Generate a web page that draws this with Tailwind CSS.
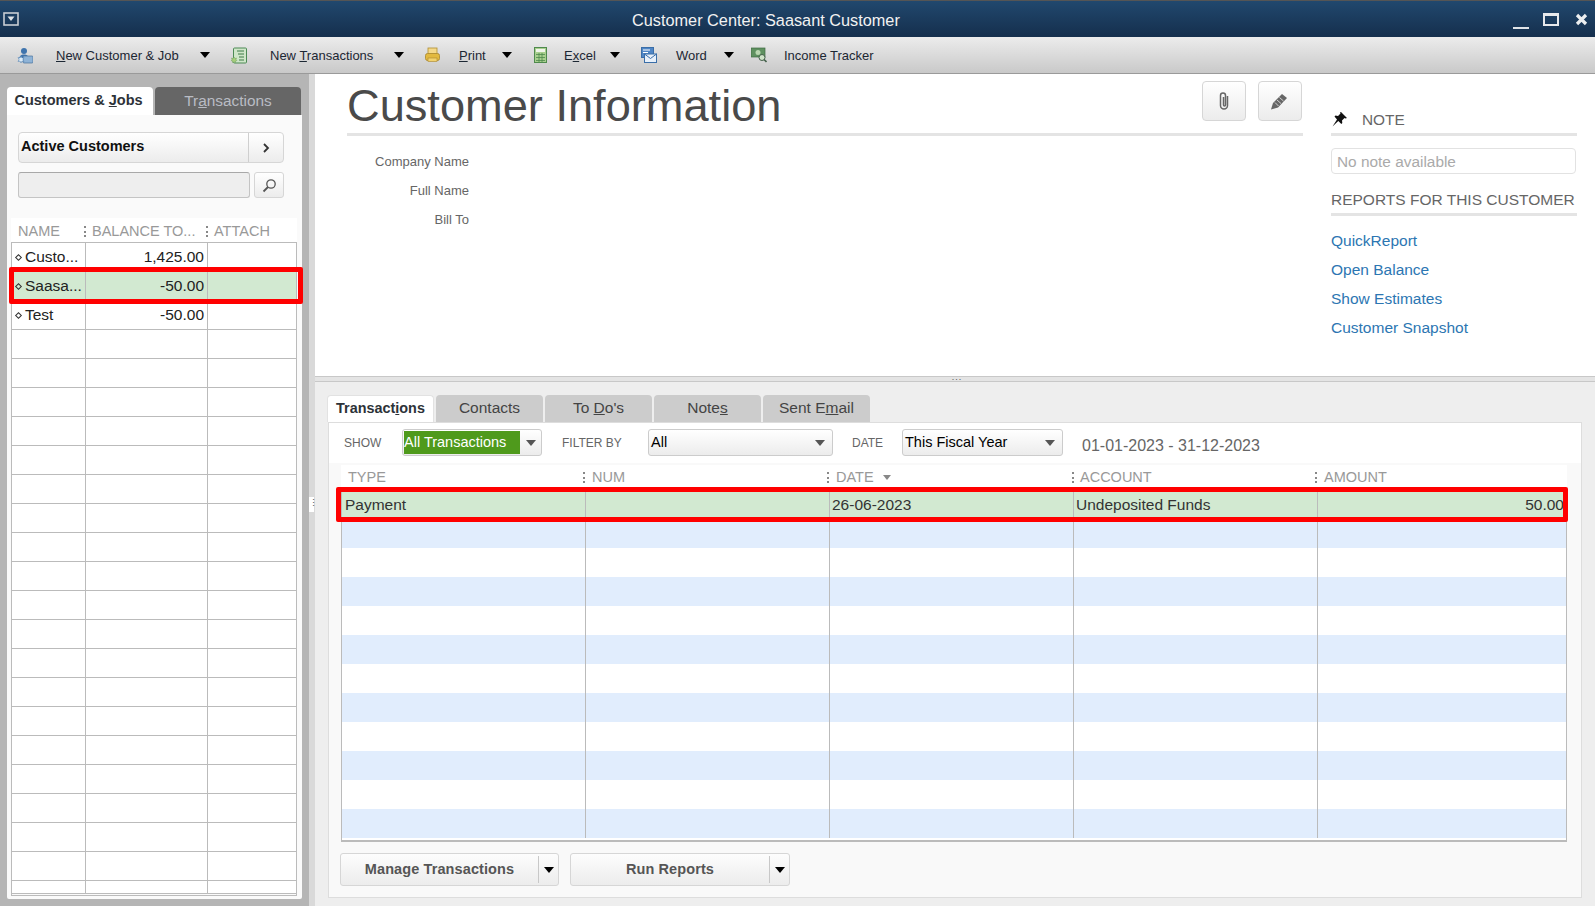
<!DOCTYPE html>
<html lang="en">
<head>
  <meta charset="UTF-8">
  <title>Customer Center: Saasant Customer</title>
  <script src="https://cdn.jsdelivr.net/npm/@tailwindcss/browser@4"></script>
</head>
<body class="font-['Liberation_Sans',Arial,sans-serif] bg-[#eeeeee] overflow-hidden">
<div class="w-[1595px] h-[906px] flex flex-col overflow-hidden">

  <!-- Title bar -->
  <header class="h-[37px] shrink-0 flex items-center relative bg-linear-to-b from-[#21486e] to-[#152f4d] border-t border-[#555]">
    <svg class="ml-[3px]" width="16" height="14" viewBox="0 0 16 14"><rect x="1" y="1" width="14" height="12" fill="none" stroke="#c9ced4" stroke-width="1.6"/><path d="M4.5 4.5h7L8 9z" fill="#dfe3e7"/></svg>
    <span class="ml-[613px] mt-[2px] text-[16.3px] text-[#f2f2f2]">Customer Center: Saasant Customer</span>
    <div class="ml-auto mr-[7px] flex items-center gap-[14px]">
      <span class="w-[16px] h-[2px] bg-[#dfe3e7] mt-[18px]"></span>
      <span class="w-[16px] h-[13px] mr-[2px] border-2 border-t-[3px] border-[#e6e8eb]"></span>
      <svg width="13" height="13" viewBox="0 0 13 13"><path d="M2 2l9 9M11 2l-9 9" stroke="#eceef0" stroke-width="3.2"/></svg>
    </div>
  </header>

  <!-- Toolbar -->
  <nav class="h-[37px] shrink-0 flex items-center bg-linear-to-b from-[#ececec] to-[#c9c9c9] border-b border-[#9a9a9a] text-[13px] text-[#1c2733]">
    <svg class="ml-[17px]" width="16" height="17" viewBox="0 0 16 17"><circle cx="7" cy="4" r="3" fill="#3f74ad"/><path d="M2 13c0-4 2-5.500 5-5.500s5 1.500 5 5.500z" fill="#3f74ad"/><rect x="6" y="9" width="10" height="7" rx="1" fill="#8fb3d6" stroke="#46709c" stroke-width=".7"/><path d="M4 9l1 2 2-.5-1 2 1 2-2-.5-1 2-1-2-2 .5 1-2-1-2 2 .5z" fill="#dcebf7" stroke="#3f74ad" stroke-width=".5"/></svg>
    <span class="ml-[23px] mt-[1px] w-[122px] whitespace-nowrap"><u>N</u>ew Customer &amp; Job</span>
    <span class="ml-[22px] w-0 h-0 border-x-[5px] border-x-transparent border-t-[6px] border-t-black"></span>
    <svg class="ml-[21px]" width="16" height="17" viewBox="0 0 16 17"><rect x="2.500" y="1" width="13" height="15" rx="1" fill="#cfe6c9" stroke="#4c8a55"/><path d="M6 4h7M7 7h6M8 10h5M8 13h5" stroke="#3f7a49"/><path d="M3 10l1 1.500 1.500-.5-.5 1.500 1 1-1.500.5 0 1.500-1.500-.5-1.500.5 0-1.500-1.500-.5 1-1-.5-1.500 1.500.5z" fill="#a6cf7d" stroke="#5d8f4d" stroke-width=".4"/></svg>
    <span class="ml-[23px] mt-[1px] w-[102px] whitespace-nowrap">New <u>T</u>ransactions</span>
    <span class="ml-[22px] w-0 h-0 border-x-[5px] border-x-transparent border-t-[6px] border-t-black"></span>
    <svg class="ml-[21px]" width="15" height="16" viewBox="0 0 15 16"><rect x="3" y="1" width="9" height="7" fill="#f4d98a" stroke="#b08d2e" stroke-width=".8"/><rect x=".5" y="6.500" width="14" height="7" rx="2" fill="#e2b93f" stroke="#a8862c" stroke-width=".8"/><rect x="3" y="11" width="9" height="3.500" fill="#f2d26e" stroke="#a8862c" stroke-width=".6"/></svg>
    <span class="ml-[19px] mt-[1px] w-[26px]"><u>P</u>rint</span>
    <span class="ml-[17px] w-0 h-0 border-x-[5px] border-x-transparent border-t-[6px] border-t-black"></span>
    <svg class="ml-[22px]" width="13" height="16" viewBox="0 0 13 16"><rect x=".5" y=".5" width="12" height="15" fill="#a9cf8f" stroke="#4f8a4d"/><rect x="2" y="2" width="9" height="3" fill="#f0f5ea"/><path d="M2 7.500h9M2 10.500h9M2 13.500h9M5 6v9M8 6v9" stroke="#4f8a4d" stroke-width=".8"/></svg>
    <span class="ml-[17px] mt-[1px] w-[33px]">E<u>x</u>cel</span>
    <span class="ml-[13px] w-0 h-0 border-x-[5px] border-x-transparent border-t-[6px] border-t-black"></span>
    <svg class="ml-[21px]" width="16" height="16" viewBox="0 0 16 16"><rect x=".5" y=".5" width="12" height="10" fill="#4f86c6" stroke="#3a6ea8"/><path d="M2 3h7M2 5.500h5" stroke="#fff"/><rect x="3.500" y="7" width="12" height="8.500" fill="#e7f0fa" stroke="#3a6ea8"/><path d="M3.500 7l6 4.500 6-4.500" fill="none" stroke="#3a6ea8"/></svg>
    <span class="ml-[19px] mt-[1px] w-[31px]">Word</span>
    <span class="ml-[17px] w-0 h-0 border-x-[5px] border-x-transparent border-t-[6px] border-t-black"></span>
    <svg class="ml-[17px]" width="16" height="16" viewBox="0 0 16 16"><rect x="0" y="1" width="14" height="9" fill="#5f9160" stroke="#3f6b43" stroke-width=".7"/><circle cx="7" cy="5.500" r="2.500" fill="#b9d6b0"/><circle cx="11" cy="10.500" r="3" fill="#cfe3c8" stroke="#44604a"/><path d="M13 12.500l2.500 2.500" stroke="#44604a" stroke-width="1.600"/></svg>
    <span class="ml-[17px] mt-[1px] whitespace-nowrap">Income Tracker</span>
  </nav>

  <div class="flex-1 flex min-h-0">

    <!-- Sidebar -->
    <aside class="w-[309px] shrink-0 bg-[#b5b5b5] pl-[7px] pt-[13px]">
      <div class="flex h-[28px]">
        <div class="w-[146px] bg-white rounded-t-[4px] flex items-center justify-center pr-[3px] font-bold text-[14.5px] text-[#2d3238]"><span>Customers &amp; <u>J</u>obs</span></div>
        <div class="ml-[2px] w-[146px] bg-[#666666] rounded-t-[4px] flex items-center justify-center text-[15.4px] text-[#b9bcc4]"><span>Tr<u>a</u>nsactions</span></div>
      </div>
      <div class="w-[295px] h-[784px] bg-[#fafafa] px-[4px] pt-[17px] rounded-b-[2px]">
        <div class="ml-[7px] w-[266px] h-[31px] flex border border-[#d6d6d6] rounded-[4px] bg-linear-to-b from-white to-[#ececec]">
          <span class="flex-1 pl-[2px] leading-[27px] font-bold text-[14.5px] text-[#111]">Active Customers</span>
          <span class="w-[35px] border-l border-[#cfcfcf] flex items-center justify-center">
            <svg width="8" height="10" viewBox="0 0 8 10"><path d="M2 1l4 4-4 4" fill="none" stroke="#333" stroke-width="1.800"/></svg>
          </span>
        </div>
        <div class="ml-[7px] mt-[9px] w-[266px] flex gap-[4px]">
          <div class="w-[232px] h-[26px] bg-[#eeeeee] border border-[#c4c4c4] border-t-[#a8a8a8] rounded-[3px]"></div>
          <div class="w-[30px] h-[26px] border border-[#d6d6d6] rounded-[3px] bg-linear-to-b from-white to-[#ececec] flex items-center justify-center">
            <svg width="15" height="15" viewBox="0 0 15 15"><circle cx="9" cy="6" r="4.200" fill="none" stroke="#555" stroke-width="1.300"/><path d="M6 9l-4.500 4.500" stroke="#555" stroke-width="1.800"/></svg>
          </div>
        </div>
        <div class="mt-[20px] w-[286px] h-[24px] bg-white grid grid-cols-[75px_122px_1fr] items-center text-[14.5px] leading-[26px] text-[#999999] pl-[1px]">
          <span class="pl-[6px]">NAME</span>
          <span class="flex items-center whitespace-nowrap"><i class="w-0 h-[11px] -ml-[3px] mr-[6px] border-l-2 border-dotted border-[#888]"></i>BALANCE TO...</span>
          <span class="flex items-center"><i class="w-0 h-[11px] -ml-[3px] mr-[6px] border-l-2 border-dotted border-[#888]"></i>ATTACH</span>
        </div>
        <div id="custRows" class="w-[286px] h-[654px] border border-[#bbbbbb]"></div>
      </div>
    </aside>

    <!-- Splitter -->
    <div class="w-[6px] shrink-0 bg-[#d9d9d9] flex items-start">
      <span class="mt-[423px] w-[5px] h-[15px] bg-white text-[#555] text-[9px] leading-[13px] text-center">⋮</span>
    </div>

    <!-- Main -->
    <main class="flex-1 flex flex-col min-w-0">
      <section class="h-[302px] shrink-0 bg-white flex pl-[32px]">
        <div class="w-[956px]">
          <div class="h-[62px] border-b-[3px] border-[#e4e4e4] flex justify-between">
            <h1 class="text-[45.2px] leading-[62px] text-[#4a4a4a] mt-[1px]">Customer Information</h1>
            <div class="flex gap-[12px] pt-[7px] pr-px">
              <button class="w-[44px] h-[40px] border border-[#d6d6d6] rounded-[4px] bg-linear-to-b from-white to-[#ececec] flex items-center justify-center">
                <svg width="12" height="20" viewBox="0 0 12 20"><path d="M9.500 5v9.500a3.500 3.500 0 0 1-7 0V4.500a2.500 2.500 0 0 1 5 0V14a1 1 0 0 1-2 0V6" fill="none" stroke="#666" stroke-width="1.500"/></svg>
              </button>
              <button class="w-[44px] h-[40px] border border-[#d6d6d6] rounded-[4px] bg-linear-to-b from-white to-[#ececec] flex items-center justify-center pr-[3px]">
                <svg width="18" height="17" viewBox="0 0 18 17"><path d="M12 1l5 4-9 9.500-7 2 2-6.500z" fill="#666"/><path d="M9.500 4.500l4 3.500M7 7l4 3.500M5 9.500l3.500 3.500" stroke="#eee" stroke-width=".8"/></svg>
              </button>
            </div>
          </div>
          <dl class="mt-[11px] w-[122px] text-right text-[13px] text-[#666666] leading-[29px]">
            <dt>Company Name</dt>
            <dt>Full Name</dt>
            <dt>Bill To</dt>
          </dl>
        </div>
        <div class="ml-[28px] w-[246px]">
          <div class="h-[62px] border-b-[3px] border-[#e4e4e4] flex items-end pb-[2px] text-[15.4px] text-[#666666]">
            <svg class="mb-[4px] ml-px" width="15" height="15" viewBox="0 0 15 15"><path d="M9 0l6 6-1.500.6-1-.6-2.500 2.500.3 2.500-1 1-3-3L1 14 .5 14.500 5 7.500 2.500 4.500l1-1 2.500.4 2.500-2.500-.5-1z" fill="#111"/></svg>
            <span class="ml-[15px]">NOTE</span>
          </div>
          <div class="mt-[12px] w-[245px] h-[26px] border border-[#e2e2e2] rounded-[4px] pl-[5px] leading-[26px] text-[15.4px] text-[#aaaaaa]">No note available</div>
          <div class="mt-[16px] h-[26px] border-b-[3px] border-[#e4e4e4] whitespace-nowrap text-[15.5px] leading-[20px] text-[#666666]">REPORTS FOR THIS CUSTOMER</div>
          <ul class="mt-[10px] text-[15.5px] leading-[29px] text-[#2c76b2]">
            <li>QuickReport</li>
            <li>Open Balance</li>
            <li>Show Estimates</li>
            <li>Customer Snapshot</li>
          </ul>
        </div>
      </section>

      <div class="h-[6px] shrink-0 bg-[#e4e4e4] border-y border-[#c8c8c8] flex justify-center text-[#555] text-[9px] leading-[1px]">
        <span class="ml-[4px] tracking-[1px]">...</span>
      </div>

      <section class="flex-1 pl-[12px] pr-[13px] flex flex-col min-h-0">
        <div class="mt-[13px] h-[27px] shrink-0 flex gap-[2px] text-[15.5px] text-[#444444]">
          <div class="w-[107px] bg-white rounded-t-[4px] border-t border-x border-[#e2e2e2] flex items-center justify-center font-bold text-[14.4px] text-[#2d3238]"><span>Transact<u>i</u>ons</span></div>
          <div class="w-[107px] bg-[#cccccc] rounded-t-[4px] flex items-center justify-center pb-px">Contacts</div>
          <div class="w-[107px] bg-[#cccccc] rounded-t-[4px] flex items-center justify-center pb-px"><span>To <u>D</u>o's</span></div>
          <div class="w-[107px] bg-[#cccccc] rounded-t-[4px] flex items-center justify-center pb-px"><span>Note<u>s</u></span></div>
          <div class="w-[107px] bg-[#cccccc] rounded-t-[4px] flex items-center justify-center pb-px"><span>Sent E<u>m</u>ail</span></div>
        </div>
        <div class="ml-px w-[1254px] h-[476px] bg-[#f9f9f9] border border-[#dddddd]">
          <div class="h-[40px] bg-white pt-[6px] flex text-[12px] text-[#666666]">
            <span class="ml-[15px] w-[58px] leading-[28px]">SHOW</span>
            <div class="w-[140px] h-[27px] border border-[#cccccc] rounded-[3px] bg-linear-to-b from-white to-[#ececec] flex items-center pl-px">
              <span class="w-[116px] h-[23px] bg-[#4f9a1c] text-white text-[14.5px] leading-[23px] whitespace-nowrap">All Transactions</span>
              <span class="ml-[6px] w-0 h-0 border-x-[5px] border-x-transparent border-t-[6px] border-t-[#555]"></span>
            </div>
            <span class="ml-[20px] w-[86px] leading-[28px]">FILTER BY</span>
            <div class="w-[185px] h-[27px] border border-[#cccccc] rounded-[3px] bg-linear-to-b from-white to-[#ececec] flex items-center pl-[2px] justify-between pr-[7px] text-[14.5px] text-black">
              <span>All</span>
              <span class="w-0 h-0 border-x-[5px] border-x-transparent border-t-[6px] border-t-[#555]"></span>
            </div>
            <span class="ml-[19px] w-[50px] leading-[28px]">DATE</span>
            <div class="w-[161px] h-[27px] border border-[#cccccc] rounded-[3px] bg-linear-to-b from-white to-[#ececec] flex items-center pl-[2px] justify-between pr-[7px] text-[14.5px] text-black">
              <span>This Fiscal Year</span>
              <span class="w-0 h-0 border-x-[5px] border-x-transparent border-t-[6px] border-t-[#555]"></span>
            </div>
            <span class="ml-[19px] text-[16px] leading-[34px] text-[#666666]">01-01-2023 - 31-12-2023</span>
          </div>
          <div class="ml-[12px] mt-[2px] w-[1226px] h-[25px] bg-white grid grid-cols-[245px_244px_245px_243px_1fr] items-center text-[14.5px] text-[#999999] pl-px">
            <span class="pl-[6px]">TYPE</span>
            <span class="flex items-center"><i class="w-0 h-[11px] -ml-[4px] mr-[7px] border-l-2 border-dotted border-[#888]"></i>NUM</span>
            <span class="flex items-center"><i class="w-0 h-[11px] -ml-[4px] mr-[7px] border-l-2 border-dotted border-[#888]"></i>DATE<b class="ml-[9px] w-0 h-0 border-x-[4px] border-x-transparent border-t-[5px] border-t-[#888]"></b></span>
            <span class="flex items-center"><i class="w-0 h-[11px] -ml-[4px] mr-[6px] border-l-2 border-dotted border-[#888]"></i>ACCOUNT</span>
            <span class="flex items-center"><i class="w-0 h-[11px] -ml-[4px] mr-[7px] border-l-2 border-dotted border-[#888]"></i>AMOUNT</span>
          </div>
          <div id="txnRows" class="ml-[12px] w-[1226px] h-[352px] bg-white border-x border-b-2 border-[#bbbbbb]"></div>
          <div class="ml-[11px] mt-[11px] flex gap-[11px] font-bold text-[14.5px] tracking-[0.1px] text-[#555555]">
            <div class="w-[219px] h-[33px] border border-[#d6d6d6] rounded-[3px] bg-linear-to-b from-[#fdfdfd] to-[#ececec] flex items-center">
              <span class="w-[197px] text-center whitespace-nowrap">Manage Transactions</span>
              <span class="h-[27px] border-l border-[#c8c8c8]"></span>
              <span class="ml-[5px] w-0 h-0 border-x-[5px] border-x-transparent border-t-[6px] border-t-black"></span>
            </div>
            <div class="w-[220px] h-[33px] border border-[#d6d6d6] rounded-[3px] bg-linear-to-b from-[#fdfdfd] to-[#ececec] flex items-center">
              <span class="w-[198px] text-center">Run Reports</span>
              <span class="h-[27px] border-l border-[#c8c8c8]"></span>
              <span class="ml-[5px] w-0 h-0 border-x-[5px] border-x-transparent border-t-[6px] border-t-black"></span>
            </div>
          </div>
        </div>
      </section>
    </main>
  </div>
</div>

<script>
  // left customer list
  const customers = [['Custo...', '1,425.00'], ['Saasa...', '-50.00'], ['Test', '-50.00']];
  let html = '';
  for (let i = 0; i < 23; i++) {
    const c = customers[i];
    const rowH = i == 22 ? 'h-[13px]' : 'h-[29px]';
    const rowBg = i == 1 ? 'bg-[#d2e9d1]' : 'bg-white';
    html += `<div class="relative ${rowH} ${rowBg} border-b border-[#bbbbbb] grid grid-cols-[74px_122px_1fr] text-[15.5px] leading-[28px] text-[#222]">
      <div class="border-r border-[#bbbbbb] pl-[4px] flex items-center overflow-hidden whitespace-nowrap">${c ? '<i class="w-[5px] h-[5px] rotate-45 border border-[#333] mr-[4px] shrink-0"></i>' + c[0] : ''}</div>
      <div class="border-r border-[#bbbbbb] text-right pr-[3px]">${c ? c[1] : ''}</div>
      <div></div>
      ${i == 1 ? '<div class="absolute z-10 -left-[3px] -top-[5px] w-[294px] h-[37px] border-[5px] border-[#ff0000] rounded-[2px]"></div>' : ''}
    </div>`;
  }
  document.getElementById('custRows').innerHTML = html;

  // transactions grid
  let rows = '';
  for (let i = 0; i < 12; i++) {
    const rowBg = i == 0 ? 'bg-[#d2e9d1]' : (i % 2 == 1 ? 'bg-[#e1edfd]' : 'bg-white');
    const t = i == 0 ? ['Payment', '', '26-06-2023', 'Undeposited Funds', '50.00'] : ['', '', '', '', ''];
    rows += `<div class="relative h-[29px] ${rowBg} grid grid-cols-[244px_244px_244px_244px_1fr] text-[15.5px] leading-[29px] text-[#333]">
      <div class="border-r border-[#bbbbbb] pl-[3px]">${t[0]}</div>
      <div class="border-r border-[#bbbbbb] pl-[3px]">${t[1]}</div>
      <div class="border-r border-[#bbbbbb] pl-[2px]">${t[2]}</div>
      <div class="border-r border-[#bbbbbb] pl-[2px]">${t[3]}</div>
      <div class="text-right pr-[2px]">${t[4]}</div>
      ${i == 0 ? '<div class="absolute z-10 -left-[6px] -top-[3px] w-[1232px] h-[35px] border-[5px] border-[#ff0000] rounded-[2px]"></div>' : ''}
    </div>`;
  }
  document.getElementById('txnRows').innerHTML = rows;
</script>
</body>
</html>
